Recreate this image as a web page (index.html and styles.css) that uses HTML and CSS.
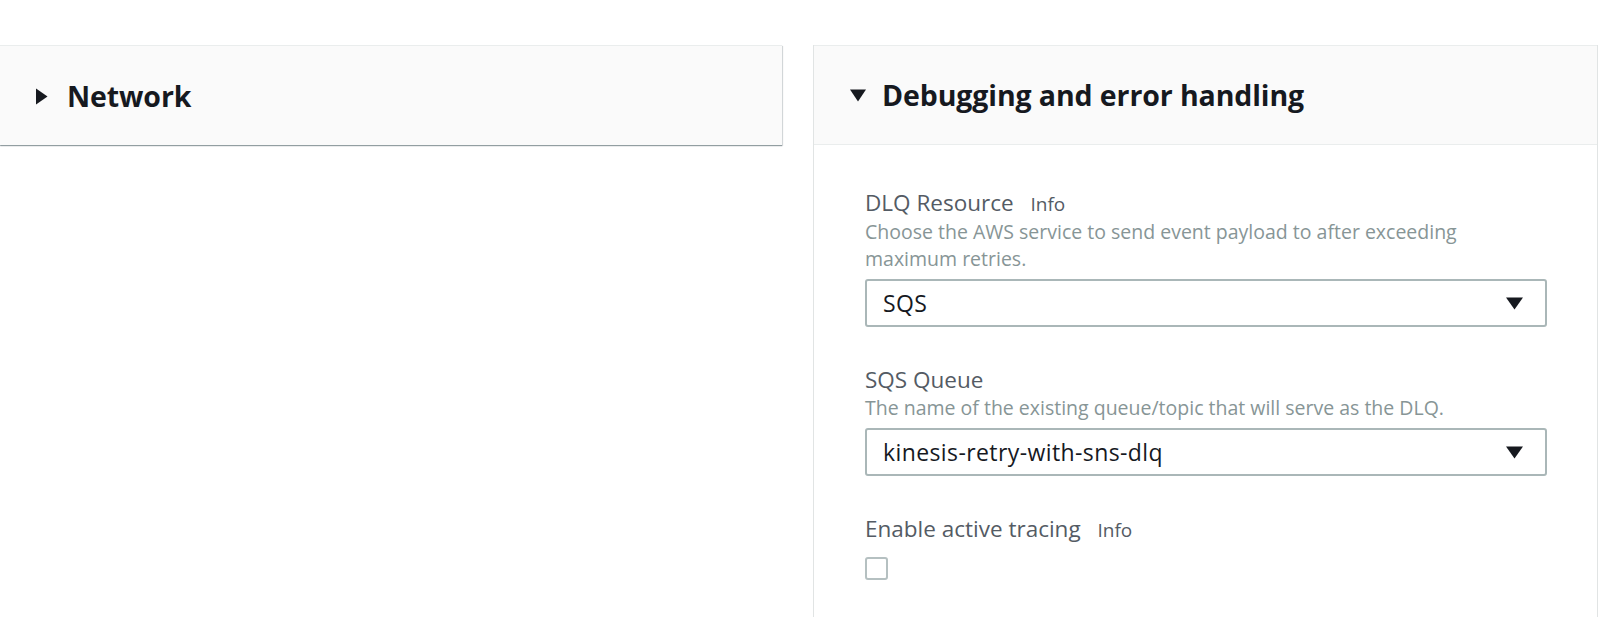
FILE: index.html
```html
<!DOCTYPE html>
<html lang="en">
<head>
<meta charset="utf-8">
<title>Function settings</title>
<link rel="stylesheet" href="styles.css">
</head>
<body>
<div class="page">
  <section class="panel panel-left">
    <div class="panel-header">
      <svg class="caret caret-right" width="13" height="17" viewBox="0 0 13 17"><path d="M1 0.5 L12.5 8.5 L1 16.5 Z" fill="#16191f"/></svg>
      <h2 class="panel-title">Network</h2>
    </div>
  </section>
  <section class="panel panel-right">
    <div class="panel-header panel-header-open">
      <svg class="caret caret-down" width="16" height="13" viewBox="0 0 16 13"><path d="M0 0.5 L16 0.5 L8 12.5 Z" fill="#16191f"/></svg>
      <h2 class="panel-title">Debugging and error handling</h2>
    </div>
    <div class="panel-body">
      <div class="field">
        <div class="field-label">DLQ Resource <span class="info">Info</span></div>
        <p class="field-desc">Choose the AWS service to send event payload to after exceeding maximum retries.</p>
        <div class="select">
          <span class="select-value">SQS</span>
          <svg class="select-arrow" width="17" height="13" viewBox="0 0 17 13"><path d="M0 0.5 L17 0.5 L8.5 12.5 Z" fill="#16191f"/></svg>
        </div>
      </div>
      <div class="field">
        <div class="field-label">SQS Queue</div>
        <p class="field-desc">The name of the existing queue/topic that will serve as the DLQ.</p>
        <div class="select">
          <span class="select-value">kinesis-retry-with-sns-dlq</span>
          <svg class="select-arrow" width="17" height="13" viewBox="0 0 17 13"><path d="M0 0.5 L17 0.5 L8.5 12.5 Z" fill="#16191f"/></svg>
        </div>
      </div>
      <div class="field">
        <div class="field-label">Enable active tracing <span class="info">Info</span></div>
        <div class="checkbox"></div>
      </div>
    </div>
  </section>
</div>
</body>
</html>
```

FILE: styles.css
```css
html, body {
  margin: 0;
  padding: 0;
  background: #ffffff;
  overflow: hidden;
}

body {
  font-family: "Open Sans", "Noto Sans", sans-serif;
  color: #16191f;
}

.page {
  display: flex;
  align-items: flex-start;
  gap: 31px;
  padding-top: 45px;
}

.panel {
  flex: none;
  background: #ffffff;
}

.panel-left {
  width: 782px;
  box-shadow: 0 1px 1px 0 rgba(0, 28, 36, 0.35), 1px 1px 1px 0 rgba(0, 28, 36, 0.12);
}

.panel-right {
  width: 783px;
  min-height: 620px;
  border-left: 1px solid #e1e4e4;
  border-right: 1px solid #e1e4e4;
}

.panel-header {
  height: 99px;
  border-top: 1px solid #eaeded;
  background: #fafafa;
  display: flex;
  align-items: center;
  padding-left: 35px;
}

.panel-header-open {
  padding-left: 36px;
  border-bottom: 1px solid #eaeded;
  height: 98px;
}

.caret {
  flex: none;
  display: block;
}

.caret-right {
  margin-right: 19px;
  margin-top: 1px;
}

.caret-down {
  margin-right: 16px;
  margin-top: 1px;
}

.panel-title {
  margin: 0;
  font-size: 28.5px;
  font-weight: 700;
  line-height: 36px;
  color: #16191f;
  letter-spacing: -0.1px;
}

.panel-body {
  padding: 44px 50px 40px 51px;
}

.field {
  margin-bottom: 39px;
}

.field-label {
  font-size: 22.5px;
  line-height: 28px;
  color: #545b64;
}

.info {
  font-size: 19px;
  margin-left: 11px;
  color: #545b64;
}

.field-desc {
  margin: 0 0 7px;
  max-width: 640px;
  font-size: 19.5px;
  line-height: 27px;
  color: #879596;
}

.select {
  height: 44px;
  border: 2px solid #aab7b8;
  border-radius: 3px;
  display: flex;
  align-items: center;
  justify-content: space-between;
  padding: 0 22px 0 16px;
}

.select-value {
  font-size: 23px;
  letter-spacing: 0.4px;
  color: #16191f;
}

.select-arrow {
  display: block;
  margin-top: 1px;
}

.checkbox {
  margin-top: 13px;
  width: 19px;
  height: 19px;
  border: 2px solid #b5c0c1;
  border-radius: 3px;
}
```
